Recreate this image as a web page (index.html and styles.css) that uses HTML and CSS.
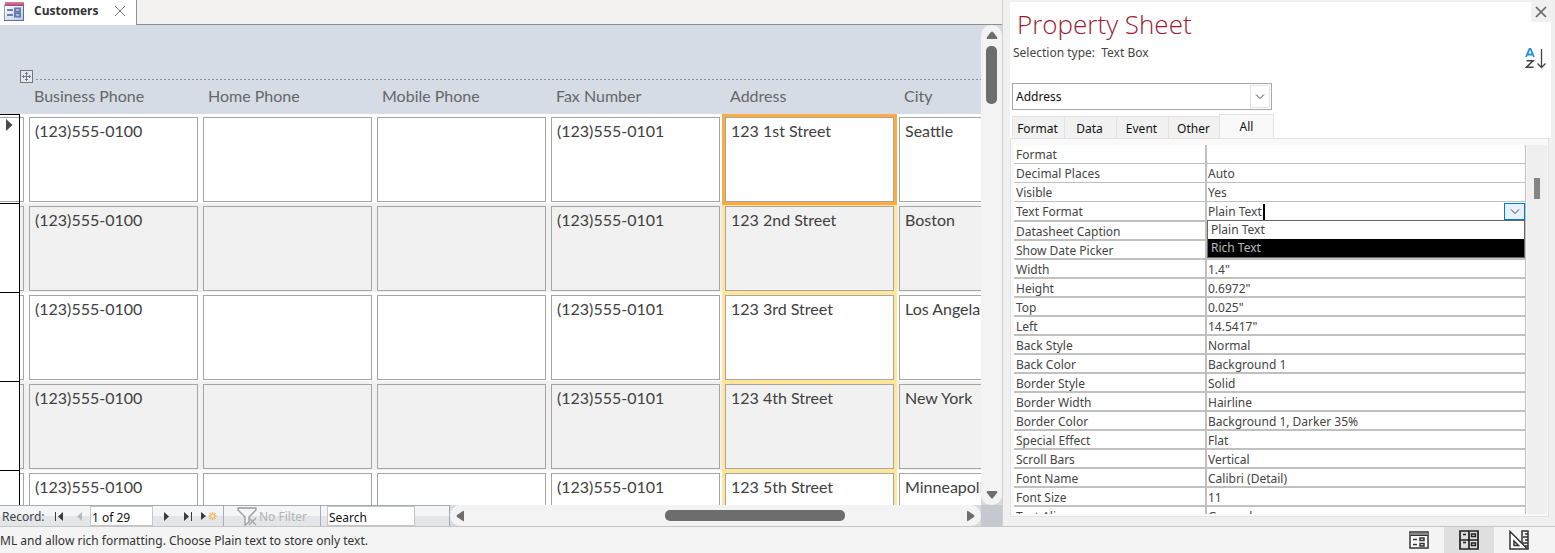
FILE: index.html
```html
<!DOCTYPE html>
<html lang="en">
<head>
<meta charset="utf-8">
<title>Customers</title>
<link rel="stylesheet" href="styles.css">
</head>
<body>
<div class="app">
  <div class="workspace">
    <main class="document">
      <div class="doc-tabs">
        <div class="doc-tab">
          <svg class="form-icon" width="20" height="20" viewBox="0 0 20 20" aria-hidden="true">
            <defs>
              <linearGradient id="paper" x1="0" y1="0" x2="1" y2="1"><stop offset="0" stop-color="#fff"/><stop offset="1" stop-color="#b4cbea"/></linearGradient>
              <linearGradient id="cap" x1="0" y1="0" x2="0" y2="1"><stop offset="0" stop-color="#d98aa6"/><stop offset="1" stop-color="#b04069"/></linearGradient>
            </defs>
            <path d="M.5 4h19v15.500H.5z" fill="url(#paper)" stroke="#8da0c2"/>
            <path d="M0 19.500h20M19.500 5v15" stroke="#5f6f93"/>
            <path d="M1 1h19v4H1z" fill="url(#cap)"/>
            <path d="M3 9h6M3 14h6" stroke="#6c7faa" stroke-width="2"/>
            <path d="M11 7.500h5v3h-5zM11 12.500h5v3h-5z" fill="#e8effa" stroke="#6c7faa" stroke-width="2"/>
          </svg>
          <span class="doc-title">Customers</span>
          <button class="plain" aria-label="Close Customers"><svg width="12" height="12" viewBox="0 0 12 12"><path d="M1 1l10 10M11 1L1 11" stroke="#777" fill="none"/></svg></button>
        </div>
      </div>
      <div class="form-body">
        <div class="form-view">
          <header class="form-header">
            <div class="layout-handle">
              <svg width="13" height="13" viewBox="0 0 13 13" aria-hidden="true"><rect x=".5" y=".5" width="12" height="12" fill="#e4e8ee" stroke="#74777d"/><path d="M6.500 2v9M2 6.500h9M5 3.500h3M5 9.500h3M3.500 5v3M9.500 5v3" stroke="#74777d"/></svg>
              <span class="dashes"></span>
            </div>
            <div class="columns labels">
              <span></span><span>Business Phone</span><span>Home Phone</span><span>Mobile Phone</span><span>Fax Number</span><span>Address</span><span>City</span>
            </div>
          </header>
          <section class="records">
            <div class="columns record current">
              <div class="lead"><button class="selector" aria-label="Record 1"><svg width="7" height="12" viewBox="0 0 7 12"><path d="M0 0l6.500 6L0 12z" fill="#4a4a4a"/></svg></button><span class="stub"></span></div>
              <textarea aria-label="Business Phone">(123)555-0100</textarea><textarea aria-label="Home Phone"></textarea><textarea aria-label="Mobile Phone"></textarea><textarea aria-label="Fax Number">(123)555-0101</textarea><textarea aria-label="Address" class="picked">123 1st Street</textarea><textarea aria-label="City">Seattle</textarea>
            </div>
            <div class="columns record">
              <div class="lead"><button class="selector" aria-label="Record 2"></button><span class="stub"></span></div>
              <textarea aria-label="Business Phone">(123)555-0100</textarea><textarea aria-label="Home Phone"></textarea><textarea aria-label="Mobile Phone"></textarea><textarea aria-label="Fax Number">(123)555-0101</textarea><textarea aria-label="Address" class="picked">123 2nd Street</textarea><textarea aria-label="City">Boston</textarea>
            </div>
            <div class="columns record">
              <div class="lead"><button class="selector" aria-label="Record 3"></button><span class="stub"></span></div>
              <textarea aria-label="Business Phone">(123)555-0100</textarea><textarea aria-label="Home Phone"></textarea><textarea aria-label="Mobile Phone"></textarea><textarea aria-label="Fax Number">(123)555-0101</textarea><textarea aria-label="Address" class="picked">123 3rd Street</textarea><textarea aria-label="City">Los Angelas</textarea>
            </div>
            <div class="columns record">
              <div class="lead"><button class="selector" aria-label="Record 4"></button><span class="stub"></span></div>
              <textarea aria-label="Business Phone">(123)555-0100</textarea><textarea aria-label="Home Phone"></textarea><textarea aria-label="Mobile Phone"></textarea><textarea aria-label="Fax Number">(123)555-0101</textarea><textarea aria-label="Address" class="picked">123 4th Street</textarea><textarea aria-label="City">New York</textarea>
            </div>
            <div class="columns record">
              <div class="lead"><button class="selector" aria-label="Record 5"></button><span class="stub"></span></div>
              <textarea aria-label="Business Phone">(123)555-0100</textarea><textarea aria-label="Home Phone"></textarea><textarea aria-label="Mobile Phone"></textarea><textarea aria-label="Fax Number">(123)555-0101</textarea><textarea aria-label="Address" class="picked">123 5th Street</textarea><textarea aria-label="City">Minneapolis</textarea>
            </div>
          </section>
        </div>
        <div class="scroll-v">
          <button class="plain" aria-label="Scroll up"><svg width="12" height="8" viewBox="0 0 12 8"><path d="M5 1q1-1 2 0l4 5q1 2-1 2H2Q0 8 1 6z" fill="#6d6d6d"/></svg></button>
          <div class="track-v"><div class="thumb-v"></div></div>
          <button class="plain" aria-label="Scroll down"><svg width="12" height="8" viewBox="0 0 12 8"><path d="M5 7q1 1 2 0l4-5q1-2-1-2H2Q0 0 1 2z" fill="#6d6d6d"/></svg></button>
        </div>
      </div>
      <div class="nav-row">
        <nav class="record-nav">
          <label class="nav-label" for="rec">Record:</label>
          <button class="plain step" aria-label="First record"><svg width="9" height="9" viewBox="0 0 9 9"><path d="M.5 0v9" stroke="#3b3b3b"/><path d="M8 0v9L3 4.500z" fill="#3b3b3b"/></svg></button>
          <button class="plain step" aria-label="Previous record"><svg width="9" height="9" viewBox="0 0 9 9"><path d="M6 0v9L1 4.500z" fill="#bbb"/></svg></button>
          <input id="rec" class="nav-box rec" value="1 of 29">
          <button class="plain step next" aria-label="Next record"><svg width="9" height="9" viewBox="0 0 9 9"><path d="M2 0v9l5-4.500z" fill="#3b3b3b"/></svg></button>
          <button class="plain step" aria-label="Last record"><svg width="9" height="9" viewBox="0 0 9 9"><path d="M8.500 0v9" stroke="#3b3b3b"/><path d="M1 0v9l5-4.500z" fill="#3b3b3b"/></svg></button>
          <button class="plain step new" aria-label="New record"><svg width="17" height="10" viewBox="0 0 17 10"><path d="M1 1v8l5-4z" fill="#3b3b3b"/><path d="M12.500 1v8M8.500 5h8M9.500 2l6 6M15.500 2l-6 6" stroke="#efb860" stroke-width="1.400"/><circle cx="12.500" cy="5" r="1.500" fill="#fff4df"/></svg></button>
          <button class="plain filter" disabled><svg width="21" height="19" viewBox="0 0 21 19"><path d="M1 1h18v2l-7 7v5l-4 3V10L1 3z" fill="#f4f4f4" stroke="#999" stroke-width="1.300"/><path d="M12 11l7 7M19 11l-7 7" stroke="#aaa" stroke-width="1.500"/></svg><span>No Filter</span></button>
          <input class="nav-box search" aria-label="Search" value="Search">
        </nav>
        <div class="scroll-h">
          <button class="plain" aria-label="Scroll left"><svg width="9" height="12" viewBox="0 0 9 12"><path d="M1 5q-1 1 0 2l6 4q1 1 1-1V2q0-2-1-1z" fill="#6d6d6d"/></svg></button>
          <div class="track-h"><div class="thumb-h"></div></div>
          <button class="plain" aria-label="Scroll right"><svg width="9" height="12" viewBox="0 0 9 12"><path d="M8 5q1 1 0 2l-6 4q-1 1-1-1V2q0-2 1-1z" fill="#6d6d6d"/></svg></button>
        </div>
        <div class="corner"></div>
      </div>
    </main>
    <aside class="sheet">
      <div class="sheet-head">
        <div class="sheet-top">
          <h1>Property Sheet</h1>
          <button class="sheet-close" aria-label="Close"><svg width="12" height="12" viewBox="0 0 12 12"><path d="M1 1l10 10M11 1L1 11" stroke="#666" stroke-width="1.700"/></svg></button>
        </div>
        <div class="sheet-kind">
          <p>Selection type:&nbsp; Text Box</p>
          <button class="plain" aria-label="Sort A to Z">
            <svg width="21" height="21" viewBox="0 0 21 21" fill="none"><path d="M1 9l3.500-8h1L9 9M2.500 6.500h5" stroke="#2490d4" stroke-width="1.800"/><path d="M1.500 12.800h6.500L1.500 19.200h7" stroke="#444" stroke-width="1.600"/><path d="M16.500 1v18M12.500 15.500l4 4 4-4" stroke="#444" stroke-width="1.300"/></svg>
          </button>
        </div>
        <div class="picker">
          <select aria-label="Selected object"><option>Address</option></select>
          <span class="picker-arrow"><svg width="10" height="6" viewBox="0 0 10 6" fill="none"><path d="M1 .5l4 4 4-4" stroke="#444"/></svg></span>
        </div>
        <div class="tabs" role="tablist">
          <button role="tab">Format</button><button role="tab">Data</button><button role="tab">Event</button><button role="tab">Other</button><button role="tab" class="active" aria-selected="true">All</button>
        </div>
      </div>
      <div class="sheet-body">
        <div class="props">
          <table>
            <tbody>
            <tr class="thin"><th>Format</th><td></td></tr>
            <tr class="thin"><th>Decimal Places</th><td>Auto</td></tr>
            <tr class="thin"><th>Visible</th><td>Yes</td></tr>
            <tr class="editing"><th>Text Format</th><td>
              <div class="combo">
                <input aria-label="Text Format" value="Plain Text"><span class="caret"></span>
                <button aria-label="Open list"><svg width="10" height="6" viewBox="0 0 10 6" fill="none"><path d="M1 .5l4 4 4-4" stroke="#444"/></svg></button>
                <ul class="menu" role="listbox"><li role="option">Plain Text</li><li role="option" class="on" aria-selected="true">Rich Text</li></ul>
              </div></td></tr>
            <tr><th>Datasheet Caption</th><td></td></tr>
            <tr><th>Show Date Picker</th><td></td></tr>
            <tr><th>Width</th><td>1.4"</td></tr>
            <tr><th>Height</th><td>0.6972"</td></tr>
            <tr><th>Top</th><td>0.025"</td></tr>
            <tr><th>Left</th><td>14.5417"</td></tr>
            <tr><th>Back Style</th><td>Normal</td></tr>
            <tr><th>Back Color</th><td>Background 1</td></tr>
            <tr><th>Border Style</th><td>Solid</td></tr>
            <tr><th>Border Width</th><td>Hairline</td></tr>
            <tr><th>Border Color</th><td>Background 1, Darker 35%</td></tr>
            <tr><th>Special Effect</th><td>Flat</td></tr>
            <tr><th>Scroll Bars</th><td>Vertical</td></tr>
            <tr><th>Font Name</th><td>Calibri (Detail)</td></tr>
            <tr><th>Font Size</th><td>11</td></tr>
            <tr><th>Text Align</th><td>General</td></tr>
            </tbody>
          </table>
        </div>
        <div class="props-scroll"><div class="props-thumb"></div></div>
      </div>
    </aside>
  </div>
  <footer class="status">
    <span class="hint">ML and allow rich formatting. Choose Plain text to store only text.</span>
    <div class="views">
      <button aria-label="Form View"><svg width="20" height="18" viewBox="0 0 20 18" fill="none" stroke="#333"><path d="M1 1h18v16H1z" fill="#fff" stroke-width="1.500"/><path d="M1 3h18" stroke="#888" stroke-width="2"/><path d="M1 4.500h18"/><path d="M4 8.500h4M4 13.500h4M11 7h4v2.500h-4zM11 12.500h4V15h-4z" stroke-width="1.500"/></svg></button>
      <button class="on" aria-label="Layout View"><svg width="20" height="20" viewBox="0 0 20 20" fill="none" stroke="#222"><path d="M1 1h18v18H1zM10 1v18M1 10h18" fill="#ddd" stroke-width="1.700"/><path d="M4 4.500h3M4 12.500h3M12.500 4h4v2.500h-4zM12.500 13h4v2.500h-4z" stroke-width="1.400"/></svg></button>
      <button aria-label="Design View"><svg width="20" height="20" viewBox="0 0 20 20" fill="none" stroke="#333" stroke-width="1.500"><path d="M13 13V1h6v18M16 4h3M14 7h5M16 10h3M14 13h5M16 16h3"/><path d="M1 1.500V19h17.500z" fill="#fff"/><path d="M5 11v4.500h4.500z"/></svg></button>
    </div>
  </footer>
</div>
</body>
</html>
```

FILE: styles.css
```css
* { box-sizing: border-box; }

body {
  margin: 0;
  font: 12px/18px "Noto Sans", "Open Sans", sans-serif;
  color: #444;
}

button, input, select, textarea { font: inherit; color: inherit; border-radius: 0; margin: 0; }
button { display: inline-flex; align-items: center; justify-content: center; padding: 0; }
svg { display: block; flex: none; }
.plain { border: 0; background: none; }

.app { display: flex; flex-direction: column; height: 100vh; overflow: hidden; background: #f0f0f0; }
.workspace { display: flex; flex: 1; min-height: 0; }

.document { display: flex; flex-direction: column; flex: 1; min-width: 0; }
.doc-tabs { display: flex; height: 25px; background: #f3f2f1; border-bottom: 1px solid #8a8f9c; flex: none; }
.doc-tab {
  display: flex; align-items: center; gap: 10px;
  width: 137px; height: 25px; padding: 0 10px 4px 4px;
  background: #fff; border-right: 1px solid #8a8f9c;
}
.doc-title { flex: 1; font-family: "Open Sans", sans-serif; font-size: 12px; font-weight: 700; color: #333; }

.form-body { display: flex; flex: 1; min-height: 0; background: #d8dade; }
.form-view { flex: 1; min-width: 0; overflow: hidden; background: #fff; font: 16px/20px Lato, "Open Sans", sans-serif; }
.form-header { height: 89px; padding-top: 45px; background: #d5dce6; }
.layout-handle { display: flex; align-items: flex-start; gap: 3px; padding-left: 20px; }
.dashes {
  flex: 1; height: 1px; margin-top: 9px;
  background: repeating-linear-gradient(to right, #8b8f9a 0 2px, transparent 2px 4px);
}
.columns { display: grid; grid-template-columns: 24px repeat(6, 169px); column-gap: 5px; }
.labels { padding-top: 3px; color: #666; }
.labels span { padding-left: 5px; }

.records { position: relative; z-index: 0; }
.record { height: 89px; padding-top: 3px; background: #fff; }
.record:nth-child(even), .record:nth-child(even) textarea { background: #f1f1f1; }
.record textarea {
  height: 85px; padding: 3px 5px; resize: none; overflow: hidden; white-space: nowrap;
  border: 1px solid #a5a5a5; background: #fff; color: #404040; outline: 0; display: block;
}
.record .picked { position: relative; box-shadow: 0 1px 0 3px #ffe699; }
.record.current .picked { z-index: 1; box-shadow: 0 0 0 3px #ffab40; }
.lead { display: flex; height: 85px; }
.selector {
  position: relative; width: 20px; height: 90px; margin-top: -3px; padding: 4px 0 0 6px;
  align-items: flex-start; justify-content: flex-start;
  border: solid #000; border-width: 1px 1px 1px 0; background: #fff;
}
.current .selector::before {
  content: ""; position: absolute; left: 0; right: 0; top: 2px; height: 83px;
  border: solid #a5a5a5; border-width: 1px 0;
}
.stub { width: 4px; height: 85px; border: solid #a5a5a5; border-width: 1px 1px 1px 0; }

.scroll-v {
  display: flex; flex-direction: column; align-items: center; justify-content: space-between;
  width: 21px; padding: 6px 0; border-radius: 10px; background: #f3f3f3;
}
.track-v { flex: 1; padding-top: 7px; }
.thumb-v { width: 11px; height: 58px; border-radius: 5px; background: #6d6d6d; }

.nav-row { display: flex; height: 21px; flex: none; background: #d8dade; }
.record-nav {
  display: flex; align-items: center; flex: none; width: 450px;
  border: solid #a5abb8; border-width: 1px 1px 0 0;
  background: linear-gradient(#f4f5f7 50%, #e3e5e9 50%);
}
.nav-label { width: 51px; padding: 2px 0 0 2px; color: #444; }
.step { width: 16px; height: 18px; margin-right: 5px; }
.step.next { margin: 0 5px; }
.step.new { width: 17px; margin-right: 6px; }
.nav-box { height: 20px; padding: 2px 1px 0; border: 1px solid #c6c6c6; background: #fff; color: #111; outline: 0; }
.rec { width: 63px; margin-left: -3px; }
.filter { gap: 1px; align-self: stretch; width: 98px; border: solid #a5abb8; border-width: 0 1px; color: #b2b2b2; }
.filter span { padding-top: 2px; }
.search { width: 88px; margin-left: 6px; }
.scroll-h { display: flex; align-items: center; flex: 1; min-width: 0; padding: 0 6px; background: #f3f3f3; border-radius: 10px; }
.track-h { flex: 1; display: flex; justify-content: center; padding-left: 79px; }
.thumb-h { width: 180px; height: 11px; border-radius: 5px; background: #6d6d6d; }
.corner { width: 21px; background: #c6c8cf; }

.sheet {
  display: flex; flex-direction: column; flex: none; width: 553px;
  padding: 2px 4px 9px 7px; border-left: 1px solid #d0d0d0; background: #f0f0f0;
}
.sheet-head { background: #fff; }
.sheet-top { display: flex; justify-content: space-between; align-items: flex-start; height: 41px; padding-left: 7px; }
h1 { margin: 4px 0 0; font: 300 26px/36px "Open Sans", sans-serif; color: #9a1b2f; }
.sheet-close { width: 20px; height: 20px; border: 0; background: #f0f0f0; }
.sheet-kind { display: flex; justify-content: space-between; align-items: flex-start; height: 38px; padding: 0 5px 0 3px; }
.sheet-kind p { margin: 1px 0 0; }
.sheet-kind button { margin-top: 5px; }
.picker { position: relative; width: 260px; height: 27px; margin: 2px 0 4px 2px; }
.picker select {
  width: 100%; height: 100%; padding: 0 3px; appearance: none;
  border: 1px solid #a6a6a6; background: #fff; color: #111; outline: 0;
}
.picker-arrow {
  position: absolute; top: 2px; right: 2px; width: 20px; height: 23px;
  display: grid; place-items: center; border: 1px solid #e3e3e3; pointer-events: none;
}
.tabs { display: flex; align-items: flex-end; height: 24px; margin-left: 2px; }
.tabs button {
  width: 52px; height: 22px; border: 1px solid #e3e3e3; border-width: 1px 0 0 1px;
  background: #f1f1f1; color: #111; padding: 2px 2px 0 0;
}
.tabs .active { width: 55px; height: 24px; border-right-width: 1px; background: #f9f9f9; padding: 0; margin-left: -1px; }

.sheet-body {
  display: flex; gap: 1px; flex: 1; min-height: 0; width: 539px;
  padding: 6px 1px 2px 3px; border: 1px solid #e3e3e3; background: #f9f9f9;
}
.props { flex: 1; min-width: 0; overflow: hidden; background: #fff; }
table { width: 100%; border-collapse: separate; border-spacing: 0; table-layout: fixed; }
th, td { height: 19px; padding: 2px 2px 0; line-height: 15px; border-bottom: 2px solid #c0c0c0; text-align: left; white-space: nowrap; }
th { width: 191px; font-weight: 400; }
td { border-left: 2px solid #c0c0c0; border-right: 1px solid #c0c0c0; padding-left: 1px; }
.thin > * { border-bottom-width: 1px; line-height: 16px; }
.editing > * { height: 20px; line-height: 16px; }
.combo { position: relative; display: flex; height: 16px; }
.combo input { width: 55px; padding: 0; border: 0; outline: 0; background: none; }
.caret { width: 2px; background: #000; }
.combo button { width: 21px; height: 17px; margin: -1px -2px 0 auto; border: 1px solid #0078d4; background: #e5f1fb; }
.menu {
  position: absolute; z-index: 2; top: 16px; left: -1px; right: -2px;
  margin: 0; padding: 0; list-style: none; border: 1px solid #666; background: #fff;
}
.menu li { padding: 0 3px; line-height: 18px; }
.menu .on { background: #000; color: #bbb; }
.props-scroll { width: 20px; padding: 33px 7px 0; background: #efefef; }
.props-thumb { width: 6px; height: 21px; background: #858585; }

.status { display: flex; flex: none; height: 27px; border-top: 1px solid #c6c6c6; background: #f4f4f4; }
.hint { flex: 1; padding-top: 5px; color: #333; }
.views { display: flex; padding-right: 11px; }
.views button { width: 50px; border: 0; background: none; }
.views .on { background: #dfdfdf; }
```
